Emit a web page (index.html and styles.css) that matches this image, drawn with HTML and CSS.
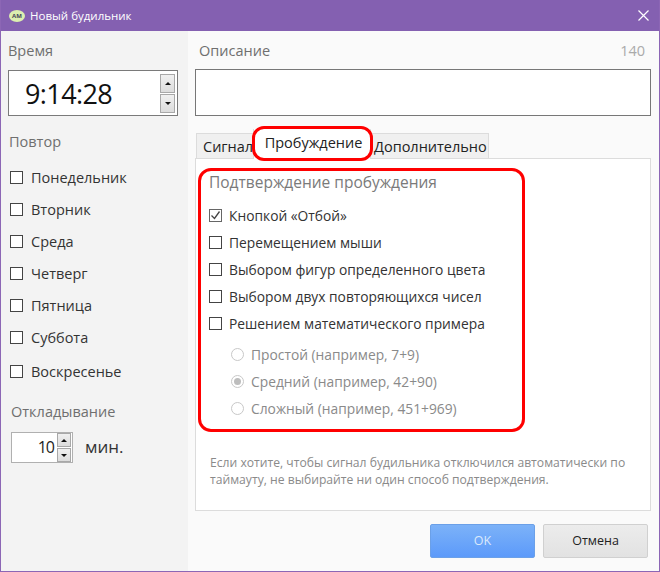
FILE: index.html
```html
<!DOCTYPE html>
<html lang="ru">
<head>
    <meta charset="UTF-8" />
    <title>Новый будильник</title>
    <link rel="stylesheet" href="styles.css">
</head>
<body>
<div class="window">
    <div class="titlebar">
        <span class="app-icon">AM</span>
        <span class="title">Новый будильник</span>
        <svg class="close" width="11" height="11" viewBox="0 0 11 11"><path d="M.5.5l10 10M10.5.5l-10 10" stroke="#fff" stroke-width="1.2" fill="none"/></svg>
    </div>
    <div class="main">
        <div class="side">
            <div class="side-head">Время</div>
            <div class="time-box">
                <span class="time-val">9:14:28</span>
                <div class="spin">
                    <span class="spin-btn"><i class="arrow up"></i></span>
                    <span class="spin-btn"><i class="arrow down"></i></span>
                </div>
            </div>
            <div class="side-head repeat-head">Повтор</div>
            <div class="days">
                <label class="day"><span class="box"></span>Понедельник</label>
                <label class="day"><span class="box"></span>Вторник</label>
                <label class="day"><span class="box"></span>Среда</label>
                <label class="day"><span class="box"></span>Четверг</label>
                <label class="day"><span class="box"></span>Пятница</label>
                <label class="day"><span class="box"></span>Суббота</label>
                <label class="day day-last"><span class="box"></span>Воскресенье</label>
            </div>
            <div class="snooze-head">Откладывание</div>
            <div class="snooze">
                <div class="snooze-box">
                    <span class="snooze-val">10</span>
                    <div class="spin small">
                        <span class="spin-btn"><i class="arrow up"></i></span>
                        <span class="spin-btn"><i class="arrow down"></i></span>
                    </div>
                </div>
                <span class="snooze-unit">мин.</span>
            </div>
        </div>
        <div class="content">
            <div class="desc-head"><span>Описание</span><span class="counter">140</span></div>
            <div class="desc-input"></div>
            <div class="tabs">
                <span class="tab tab-first">Сигнал</span>
                <span class="tab tab-active">Пробуждение</span>
                <span class="tab tab-last">Дополнительно</span>
            </div>
            <div class="panel">
                <div class="group">
                    <div class="group-head">Подтверждение пробуждения</div>
                    <label class="opt"><span class="box checked"><svg width="11" height="11" viewBox="0 0 11 11"><path d="M1.5 5.5l3 3 5-7" stroke="#444" stroke-width="1.3" fill="none"/></svg></span>Кнопкой «Отбой»</label>
                    <label class="opt"><span class="box"></span>Перемещением мыши</label>
                    <label class="opt"><span class="box"></span>Выбором фигур определенного цвета</label>
                    <label class="opt"><span class="box"></span>Выбором двух повторяющихся чисел</label>
                    <label class="opt"><span class="box"></span>Решением математического примера</label>
                    <div class="radios">
                        <label class="radio"><span class="dot"></span>Простой (например, 7+9)</label>
                        <label class="radio"><span class="dot on"></span>Средний (например, 42+90)</label>
                        <label class="radio"><span class="dot"></span>Сложный (например, 451+969)</label>
                    </div>
                </div>
                <p class="hint">Если хотите, чтобы сигнал будильника отключился автоматически по таймауту, не выбирайте ни один способ подтверждения.</p>
            </div>
            <div class="buttons">
                <span class="btn btn-ok">OK</span>
                <span class="btn btn-cancel">Отмена</span>
            </div>
        </div>
    </div>
    <div class="mark mark-tab"></div>
</div>
</body>
</html>
```

FILE: styles.css
```css
* {
    box-sizing: border-box;
}

body {
    margin: 0;
    font-family: 'Open Sans', 'Noto Sans', Arial, sans-serif;
    color: #222;
    overflow: hidden;
}

.window {
    position: relative;
    width: 660px;
    height: 572px;
    border: 1px solid #8c66b5;
    border-top: 0;
    display: flex;
    flex-direction: column;
    background: #fafafa;
}

.titlebar {
    height: 31px;
    flex: none;
    background: #8460b1;
    display: flex;
    align-items: center;
    padding: 0 10px 0 7px;
    color: #fff;
    font-size: 11.5px;
}

.app-icon {
    width: 16px;
    height: 12px;
    border-radius: 50%;
    background: #dcefb0;
    color: #445;
    font-size: 6px;
    font-weight: 700;
    line-height: 12px;
    text-align: center;
    margin: 0 5px 0 1px;
}

.title {
    flex: 1;
}

.main {
    flex: 1;
    display: flex;
    min-height: 0;
}

/* left column */
.side {
    width: 187px;
    flex: none;
    background: #f3f3f3;
    padding: 10px 0 0 7px;
}

.side-head {
    font-size: 14.5px;
    line-height: 20px;
    color: #6f6f6f;
}

.time-box {
    width: 170px;
    height: 46px;
    margin-top: 9px;
    background: #fff;
    border: 1px solid #7a7a7a;
    display: flex;
    align-items: center;
    justify-content: space-between;
    padding: 0 2px 0 16px;
}

.time-val {
    font-size: 27px;
    letter-spacing: -0.6px;
    color: #111;
}

.spin {
    display: flex;
    flex-direction: column;
    gap: 1px;
    width: 15px;
}

.spin-btn {
    height: 19px;
    background: linear-gradient(#f0f0f0, #dcdcdc);
    border: 1px solid #a8a8a8;
    display: flex;
    align-items: center;
    justify-content: center;
}

.small {
    width: 14px;
}

.small .spin-btn {
    height: 14px;
}

.arrow {
    width: 0;
    height: 0;
    border-left: 3px solid transparent;
    border-right: 3px solid transparent;
}

.arrow.up {
    border-bottom: 3px solid #111;
}

.arrow.down {
    border-top: 3px solid #111;
}

.repeat-head {
    margin-top: 16px;
    margin-left: 1px;
}

.days {
    margin-top: 9px;
    padding-left: 2px;
}

.day {
    display: flex;
    align-items: center;
    height: 32px;
    font-size: 14.5px;
    color: #333;
}

.day .box {
    margin-right: 8px;
}

.day-last {
    height: 34px;
    padding-top: 2px;
}

.box {
    width: 13px;
    height: 13px;
    flex: none;
    border: 1px solid #444;
    background: #fff;
    display: inline-flex;
    align-items: center;
    justify-content: center;
}

.box.checked {
    border-color: #666;
}

.snooze-head {
    margin-top: 15px;
    margin-left: 3px;
    font-size: 14.5px;
    line-height: 20px;
    color: #6f6f6f;
}

.snooze {
    display: flex;
    align-items: center;
    margin: 10px 0 0 3px;
}

.snooze-box {
    width: 62px;
    height: 31px;
    background: #fff;
    border: 1px solid #b0b0b0;
    display: flex;
    align-items: center;
    justify-content: flex-end;
    padding-right: 1px;
    gap: 3px;
}

.snooze-val {
    font-size: 16px;
    line-height: 20px;
    letter-spacing: -1px;
    margin-bottom: 2px;
}

.snooze-unit {
    margin-left: 12px;
    font-size: 17px;
    line-height: 20px;
    margin-bottom: 2px;
    color: #333;
}

/* right column */
.content {
    flex: 1;
    padding: 10px 9px 0 7px;
    min-width: 0;
}

.desc-head {
    display: flex;
    justify-content: space-between;
    font-size: 14.5px;
    line-height: 20px;
    color: #6f6f6f;
    padding: 0 5px 0 4px;
}

.counter {
    color: #aaa;
}

.desc-input {
    height: 47px;
    margin-top: 8px;
    background: #fff;
    border: 1px solid #777;
    margin-right: -1px;
}

.tabs {
    display: flex;
    align-items: flex-end;
    height: 33px;
    margin-top: 9px;
    font-size: 14.5px;
    color: #222;
}

.tab {
    height: 25px;
    line-height: 25px;
    background: #f0f0f0;
    border: 1px solid #dcdcdc;
    border-bottom: 0;
    white-space: nowrap;
}

.tab-first {
    width: 57px;
    padding-left: 6px;
    margin-left: 1px;
    border-right: 0;
}

.tab-active {
    width: 118px;
    height: 30px;
    line-height: 27px;
    padding-left: 3px;
    background: #fff;
    text-align: center;
    border-top: 0;
    border-bottom: 0;
    position: relative;
    top: 1px;
}

.tab-last {
    width: 118px;
    padding-left: 3px;
    border-left: 0;
}

.panel {
    height: 353px;
    background: #fff;
    border: 1px solid #dcdcdc;
    padding: 9px 0 0 2px;
    margin-right: -1px;
}

.group {
    width: 327px;
    height: 264px;
    border: 3px solid #f00;
    border-radius: 13px;
    padding: 1px 0 0 8px;
}

.group-head {
    font-size: 15.5px;
    line-height: 20px;
    color: #7a7a7a;
    margin-bottom: 10px;
    white-space: nowrap;
}

.opt {
    display: flex;
    align-items: center;
    height: 27px;
    font-size: 13.8px;
    color: #333;
}

.opt .box {
    margin-right: 7px;
}

.radios {
    margin-top: 4px;
    padding-left: 22px;
}

.radio {
    display: flex;
    align-items: center;
    height: 27px;
    font-size: 13.8px;
    color: #8a8a8a;
}

.dot {
    width: 13px;
    height: 13px;
    border-radius: 50%;
    border: 1px solid #c8c8c8;
    background: #fff;
    margin-right: 7px;
    display: inline-flex;
    align-items: center;
    justify-content: center;
}

.dot.on::after {
    content: "";
    width: 7px;
    height: 7px;
    border-radius: 50%;
    background: #bdbdbd;
}

.hint {
    margin: 22px 0 0 12px;
    width: 430px;
    font-size: 12.15px;
    line-height: 17px;
    color: #8a8a8a;
}

.buttons {
    display: flex;
    justify-content: flex-end;
    gap: 8px;
    margin-top: 13px;
    margin-right: 2px;
}

.btn {
    width: 105px;
    height: 34px;
    line-height: 32px;
    text-align: center;
    font-size: 12.5px;
    border-radius: 2px;
}

.btn-ok {
    background: linear-gradient(#7cb2f8, #5c9afa);
    border: 1px solid #6ba0e8;
    color: #dbe9fb;
}

.btn-cancel {
    background: linear-gradient(#ececec, #e2e2e2);
    border: 1px solid #d0d0d0;
    color: #222;
}

/* red annotation drawn over the tabs */
.mark {
    position: absolute;
    border: 3px solid #f00;
    pointer-events: none;
}

.mark-tab {
    left: 251px;
    top: 126px;
    width: 121px;
    height: 35px;
    border-radius: 12px;
}
```
